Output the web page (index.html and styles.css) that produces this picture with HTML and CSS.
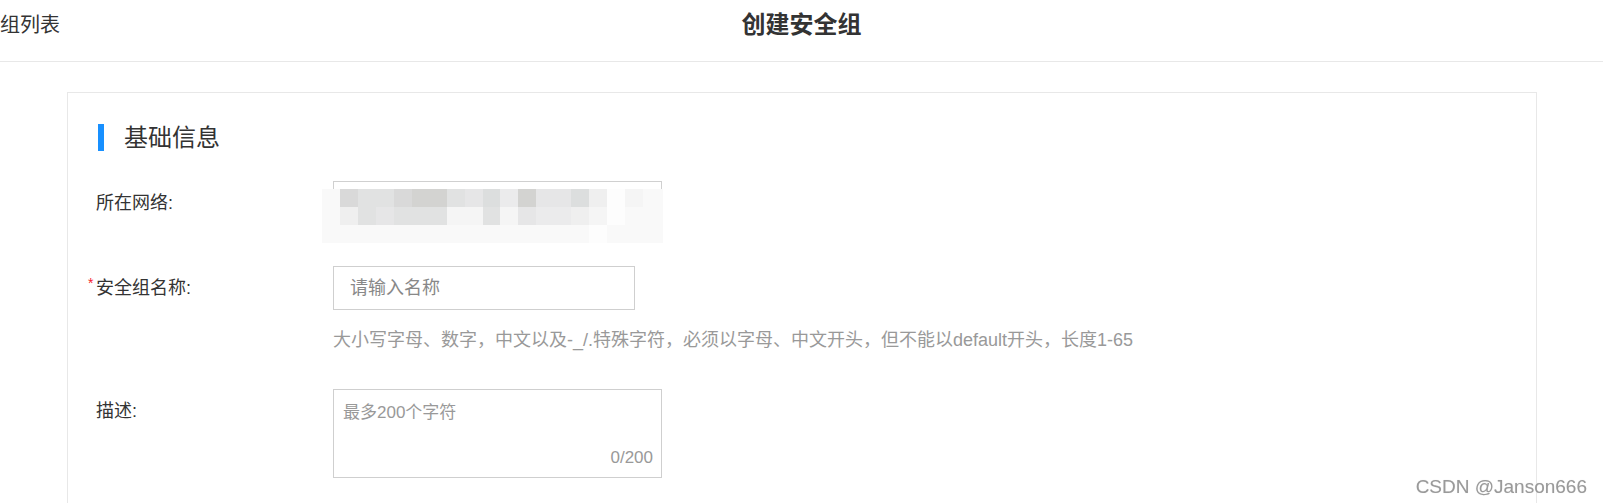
FILE: index.html
```html
<!DOCTYPE html>
<html lang="zh-CN">
<head>
<meta charset="utf-8">
<title>创建安全组</title>
<link rel="stylesheet" href="styles.css">
</head>
<body>
<header class="topbar">
  <div class="crumb">组列表</div>
  <h1 class="page-title">创建安全组</h1>
  <div class="spacer"></div>
</header>

<main class="card">
  <div class="section-head">
    <span class="section-bar"></span>
    <h2 class="section-title">基础信息</h2>
  </div>

  <div class="form">
    <div class="row row-net">
      <div class="label">所在网络:</div>
      <div class="control">
        <div class="select-box"></div>
        <div class="mosaic">
          <i class="t"></i><i class="t"></i><i class="t"></i><i class="t"></i><i class="t"></i><i class="t"></i><i class="t"></i><i class="t"></i><i class="t"></i><i class="t"></i><i class="t"></i><i class="t"></i><i class="t"></i><i class="t"></i><i class="t"></i><i class="t"></i><i class="t"></i><i class="t"></i><i class="t"></i>
          <i class="i"></i><i class="b"></i><i class="d"></i><i class="d"></i><i class="b"></i><i class="a"></i><i class="a"></i><i class="d"></i><i class="e"></i><i class="c"></i><i class="f"></i><i class="a"></i><i class="e"></i><i class="e"></i><i class="c"></i><i class="g"></i><i class="w"></i><i class="h"></i><i class="i"></i>
          <i class="i"></i><i class="g"></i><i class="d"></i><i class="e"></i><i class="d"></i><i class="d"></i><i class="d"></i><i class="h"></i><i class="h"></i><i class="d"></i><i class="h"></i><i class="e"></i><i class="f"></i><i class="f"></i><i class="g"></i><i class="h"></i><i class="w"></i><i class="i"></i><i class="i"></i>
          <i class="i"></i><i class="i"></i><i class="i"></i><i class="i"></i><i class="i"></i><i class="i"></i><i class="i"></i><i class="i"></i><i class="i"></i><i class="i"></i><i class="i"></i><i class="i"></i><i class="i"></i><i class="i"></i><i class="i"></i><i class="w"></i><i class="i"></i><i class="i"></i><i class="i"></i>
        </div>
      </div>
    </div>

    <div class="row row-name">
      <div class="label"><span class="req">*</span>安全组名称:</div>
      <div class="control">
        <div class="input-box"><span class="placeholder">请输入名称</span></div>
        <p class="hint">大小写字母、数字，中文以及-_/.特殊字符，必须以字母、中文开头，但不能以default开头，长度1-65</p>
      </div>
    </div>

    <div class="row row-desc">
      <div class="label">描述:</div>
      <div class="control">
        <div class="textarea-box">
          <span class="ta-placeholder">最多200个字符</span>
          <span class="counter">0/200</span>
        </div>
      </div>
    </div>
  </div>
</main>

<div class="watermark">CSDN @Janson666</div>
</body>
</html>
```

FILE: styles.css
```css
html, body {
  margin: 0;
  padding: 0;
  background: #fff;
}

body {
  font-family: "Liberation Sans", "Noto Sans CJK SC", sans-serif;
  color: #333;
  min-height: 503px;
  overflow: hidden;
}

/* ---------- top bar ---------- */
.topbar {
  display: grid;
  grid-template-columns: 1fr auto 1fr;
  align-items: start;
  padding: 10px 0 21px;
  border-bottom: 1px solid #e8e8e8;
}

.crumb {
  font-size: 20px;
  line-height: 30px;
  color: #333;
  white-space: nowrap;
}

.page-title {
  margin: 0;
  font-size: 24px;
  line-height: 30px;
  font-weight: bold;
  color: #333;
}

/* ---------- card ---------- */
.card {
  margin: 30px 66px 0 67px;
  border: 1px solid #e8e8e8;
  border-bottom: none;
  padding: 31px 30px 0;
  min-height: 420px;
}

.section-head {
  display: flex;
  align-items: center;
  height: 27px;
}

.section-bar {
  width: 6px;
  height: 27px;
  background: #1890ff;
}

.section-title {
  margin: 0 0 0 20px;
  font-size: 24px;
  line-height: 27px;
  font-weight: normal;
  color: #333;
}

/* ---------- form ---------- */
.form {
  display: flex;
  flex-direction: column;
  margin-top: 30px;
}

.row {
  display: grid;
  grid-template-columns: 235px auto;
  align-items: start;
}

.row-name {
  margin-top: 41px;
}

.row-desc {
  margin-top: 37px;
}

.label {
  font-size: 18px;
  line-height: 44px;
  color: #333;
  margin-left: -2px;
  white-space: nowrap;
}

.req {
  display: inline-block;
  width: 8px;
  margin-left: -8px;
  font-size: 14px;
  line-height: 14px;
  color: #f5222d;
  vertical-align: 6px;
}

.control {
  position: relative;
}

/* network select (blurred) */
.select-box {
  width: 327px;
  height: 42px;
  border: 1px solid #d0d0d0;
}

.mosaic {
  position: absolute;
  left: -11px;
  top: 1px;
  display: grid;
  grid-template-columns: 18px 18px 18px 18px 18px 17px 18px 18px 18px 17px 18px 18px 18px 17px 18px 18px 18px 18px 20px;
  grid-template-rows: 7px 18px 18px 18px;
}

.mosaic i { display: block; }
.mosaic .t { background: transparent; }
.mosaic .a { background: #d3d3d1; }
.mosaic .b { background: #d9d9d9; }
.mosaic .c { background: #dcdede; }
.mosaic .d { background: #e1e2e2; }
.mosaic .e { background: #e6e6e7; }
.mosaic .f { background: #ebebec; }
.mosaic .g { background: #efefef; }
.mosaic .h { background: #f5f5f5; }
.mosaic .i { background: #f9f9f9; }
.mosaic .w { background: #fdfdfd; }

/* name input */
.input-box {
  height: 42px;
  border: 1px solid #cfcfcf;
  display: flex;
  align-items: center;
  padding-left: 16px;
  box-sizing: content-box;
  width: 284px;
}

.placeholder {
  font-size: 18px;
  line-height: 24px;
  color: #888;
}

.hint {
  margin: 18px 0 0;
  font-size: 18px;
  line-height: 24px;
  color: #999;
  white-space: nowrap;
}

/* description textarea */
.textarea-box {
  position: relative;
  width: 327px;
  height: 87px;
  border: 1px solid #cfcfcf;
  box-sizing: content-box;
}

.ta-placeholder {
  display: block;
  padding: 11px 9px 0;
  font-size: 17px;
  line-height: 24px;
  color: #999;
}

.counter {
  position: absolute;
  right: 8px;
  bottom: 9px;
  font-size: 17px;
  line-height: 20px;
  color: #999;
}

/* watermark */
.watermark {
  position: fixed;
  right: 16px;
  bottom: 5px;
  font-family: "Liberation Sans", sans-serif;
  font-size: 19px;
  line-height: 22px;
  color: #9a9a9a;
  text-shadow: 0 0 1px #dcdcdc;
}
```
